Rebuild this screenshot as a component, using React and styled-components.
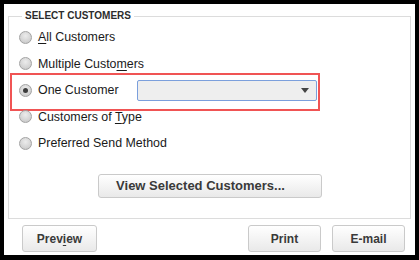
import React from 'react';
import styled, { createGlobalStyle } from 'styled-components';

const GlobalStyle = createGlobalStyle`
  html, body {
    margin: 0;
    padding: 0;
    background: #000;
  }
  body {
    width: 419px;
    height: 260px;
    overflow: hidden;
    font-family: "Liberation Sans", Arial, sans-serif;
  }
`;

const Panel = styled.div`
  box-sizing: border-box;
  margin: 4px 4px 5px 4px;
  width: 411px;
  height: 251px;
  background: #fff;
  padding: 6px 4px 0 4px;
  display: flex;
  flex-direction: column;
`;

const Group = styled.fieldset`
  box-sizing: border-box;
  margin: 0;
  height: 209px;
  border: 1px solid #dcdcdc;
  padding: 2px 0 0 10px;
  display: flex;
  flex-direction: column;
`;

const Legend = styled.legend`
  margin-left: 3px;
  padding: 0 3px;
  font-size: 10px;
  line-height: 12px;
  font-weight: bold;
  color: #2c2c2c;
`;

const Row = styled.label`
  position: relative;
  display: flex;
  align-items: center;
  height: 26.5px;
  font-size: 12.4px;
  color: #1a1a1a;

  ${p => p.$highlight && `
    &::after {
      content: '';
      position: absolute;
      left: -9px;
      top: -4px;
      width: 306px;
      bottom: -7px;
      border: 2px solid #f05454;
      pointer-events: none;
    }
  `}
`;

const Radio = styled.span`
  box-sizing: border-box;
  width: 13px;
  height: 13px;
  border-radius: 50%;
  border: 1px solid #a3a3a3;
  background: radial-gradient(circle at 50% 35%, #ececec 0%, #d4d4d4 60%, #c2c2c2 100%);
  margin-right: 6px;
  flex: none;
  display: flex;
  align-items: center;
  justify-content: center;

  &::after {
    content: '';
    width: 5px;
    height: 5px;
    border-radius: 50%;
    background: ${p => (p.$checked ? '#3c3c3c' : 'transparent')};
  }
`;

const Label = styled.span`
  width: ${p => (p.$width ? `${p.$width}px` : 'auto')};
  flex: none;
`;

const Key = styled.span`
  text-decoration: underline;
  text-underline-offset: 2px;
`;

const Combo = styled.div`
  box-sizing: border-box;
  width: 180px;
  height: 21px;
  border: 1px solid #7b9fdc;
  border-radius: 2px;
  background: #eeeeee;
  display: flex;
  align-items: center;
  justify-content: flex-end;
  padding-right: 7px;
`;

const Arrow = styled.span`
  width: 0;
  height: 0;
  border-left: 4.5px solid transparent;
  border-right: 4.5px solid transparent;
  border-top: 5px solid #444;
`;

const Center = styled.div`
  display: flex;
  justify-content: center;
  margin-top: 17px;
  padding-right: 10px;
`;

const Button = styled.button`
  box-sizing: border-box;
  width: ${p => p.$w}px;
  height: ${p => p.$h}px;
  margin: 0;
  padding: 0 ${p => p.$shift || 0}px 0 0;
  border: 1px solid #cacaca;
  border-radius: 3px;
  background: linear-gradient(#ffffff, #f4f4f4 50%, #e9e9e9);
  font-family: "Liberation Sans", Arial, sans-serif;
  font-size: ${p => p.$size || 12}px;
  font-weight: bold;
  color: #3a3a3a;
`;

const Footer = styled.div`
  display: flex;
  align-items: center;
  margin-top: 6px;
  padding: 0 6px 0 14px;
  gap: 11px;
`;

const Spacer = styled.div`
  flex: 1;
`;

const options = [
  { id: 'all', text: [<Key key="a">A</Key>, 'll Customers'] },
  { id: 'multi', text: ['Multiple Custo', <Key key="m">m</Key>, 'ers'] },
  { id: 'one', text: ['One Customer'], checked: true },
  { id: 'type', text: ['Customers of ', <Key key="t">T</Key>, 'ype'] },
  { id: 'send', text: ['Preferred Send Method'] },
];

export default function App() {
  return (
    <>
      <GlobalStyle />
      <Panel>
        <Group>
          <Legend>SELECT CUSTOMERS</Legend>
          {options.map(o => (
            <Row key={o.id} $highlight={o.checked}>
              <Radio $checked={o.checked} />
              <Label $width={o.checked ? 99 : 0}>{o.text}</Label>
              {o.checked && (
                <Combo>
                  <Arrow />
                </Combo>
              )}
            </Row>
          ))}
          <Center>
            <Button $w={224} $h={24} $size={13} $shift={18}>View Selected Customers...</Button>
          </Center>
        </Group>
        <Footer>
          <Button $w={75} $h={27}>Prev<Key>i</Key>ew</Button>
          <Spacer />
          <Button $w={73} $h={27}>Print</Button>
          <Button $w={73} $h={27}>E-mail</Button>
        </Footer>
      </Panel>
    </>
  );
}
